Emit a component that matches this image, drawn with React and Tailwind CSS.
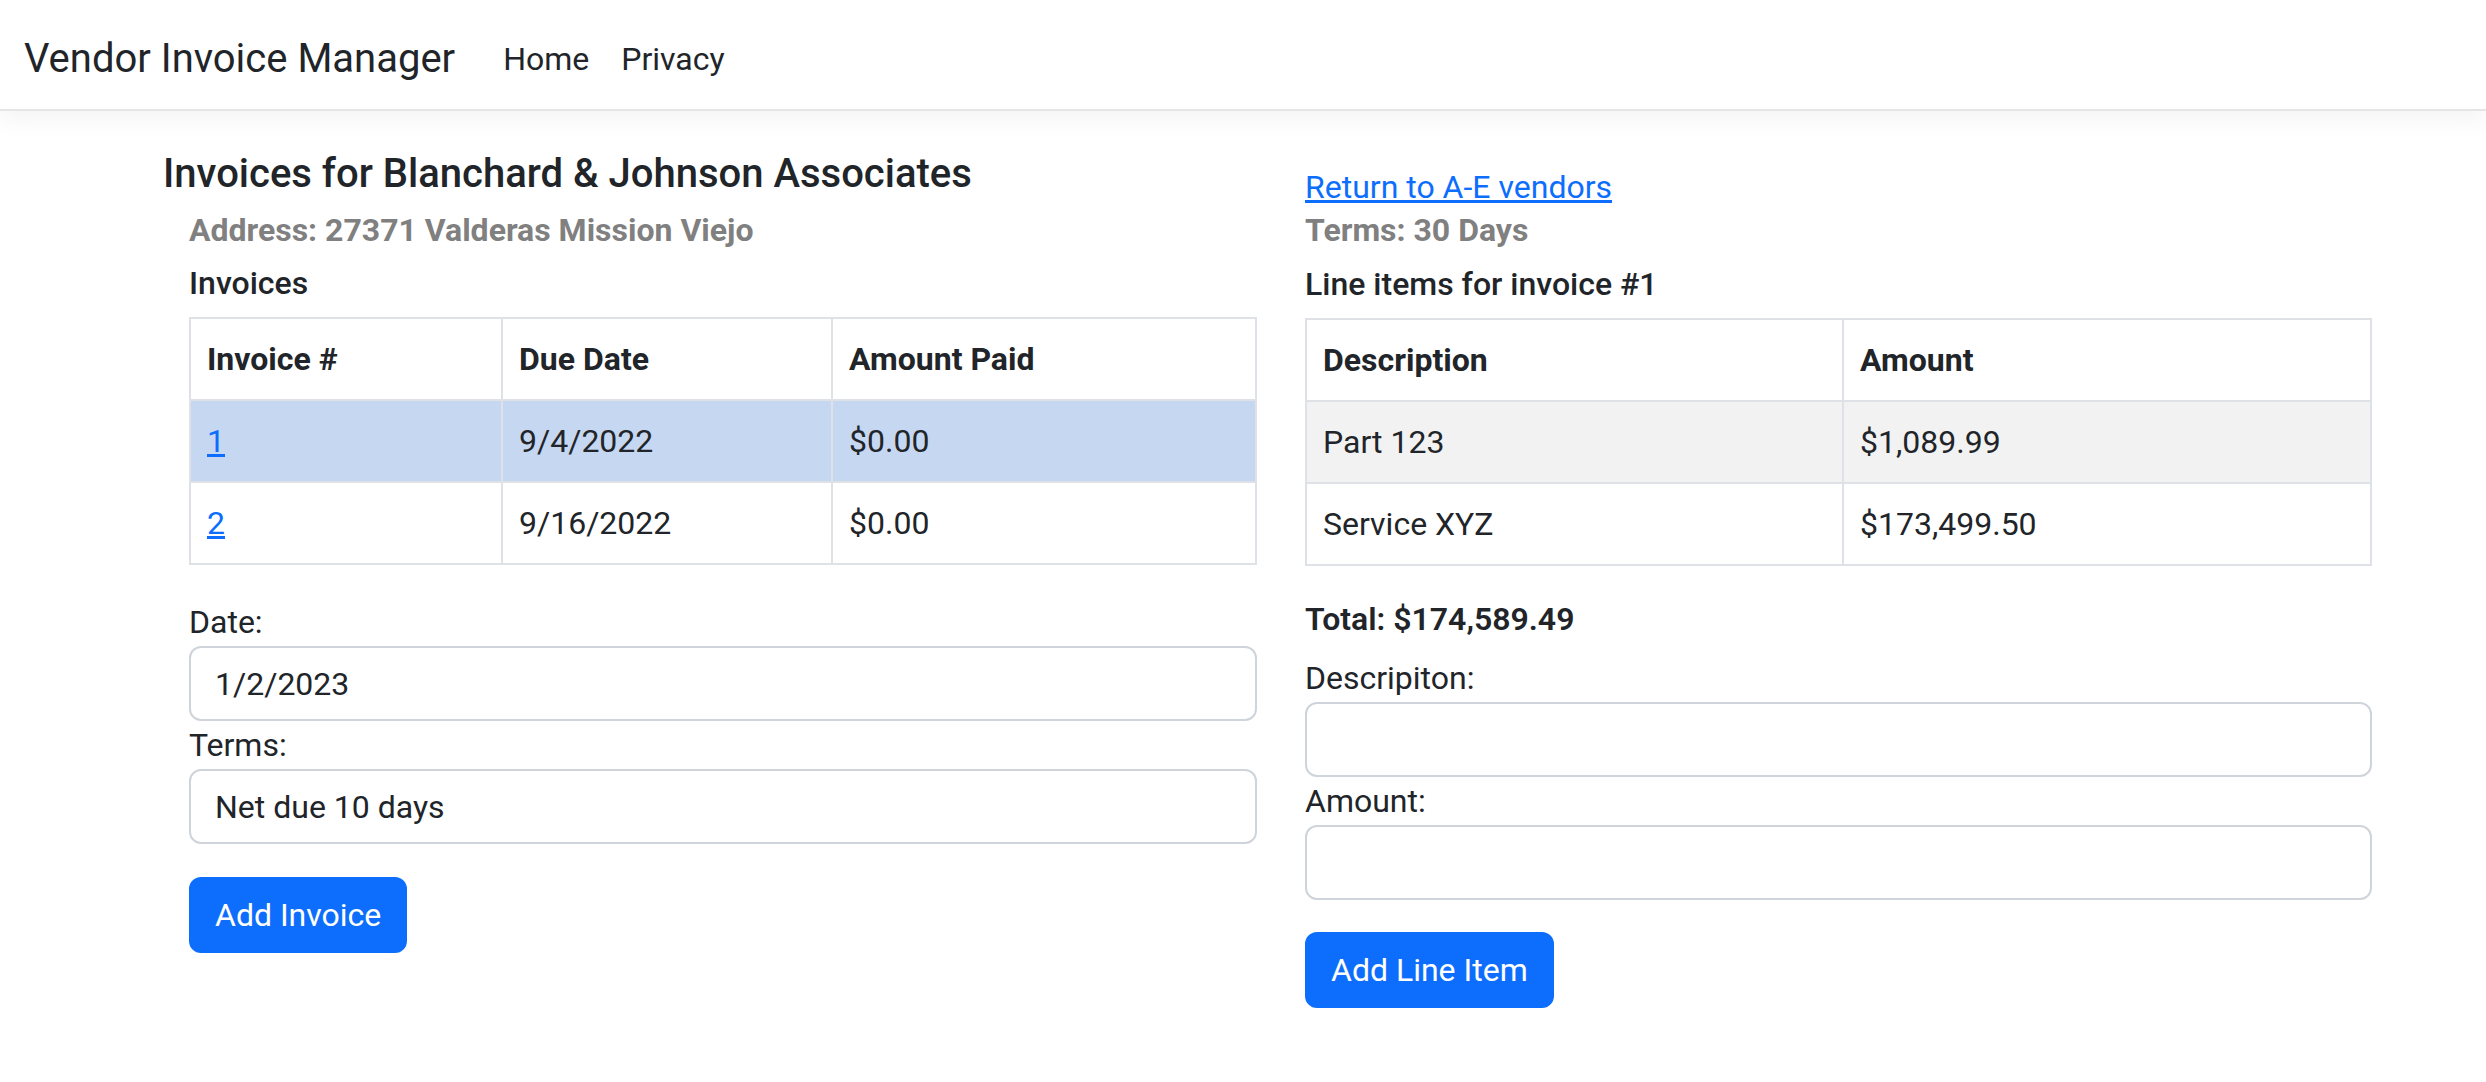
import React, { useState } from 'react';

const invoices = [
  { id: 1, due: '9/4/2022', paid: '$0.00' },
  { id: 2, due: '9/16/2022', paid: '$0.00' },
];

const lineItems = [
  { description: 'Part 123', amount: '$1,089.99' },
  { description: 'Service XYZ', amount: '$173,499.50' },
];

const App = () => {
  const [selected, setSelected] = useState(1);
  const [date, setDate] = useState('1/2/2023');
  const [terms, setTerms] = useState('Net due 10 days');
  const [description, setDescription] = useState('');
  const [amount, setAmount] = useState('');

  const cell = 'border-2 border-[#dee2e6] px-[16px] py-[16px] leading-[48px] text-left';
  const input =
    'block w-full h-[75px] border-2 border-[#ced4da] rounded-[12px] px-[24px] text-[32px] text-[#212529] bg-white outline-none';
  const button =
    'bg-[#0d6efd] text-white text-[32px] leading-[48px] px-[24px] py-[12px] rounded-[12px] border-2 border-[#0d6efd]';

  return (
    <div className="min-h-screen bg-white text-[#212529] font-['Roboto',sans-serif]">
      {/* Barra de navegação */}
      <nav className="h-[111px] flex items-center pt-[8px] px-[24px] border-b-2 border-[#e5e5e5] shadow-[0_8px_24px_rgba(0,0,0,0.05)]">
        <span className="text-[40px] leading-[60px] mr-[32px]">Vendor Invoice Manager</span>
        <a href="#" className="text-[32px] leading-[48px] px-[16px]">Home</a>
        <a href="#" className="text-[32px] leading-[48px] px-[16px]">Privacy</a>
      </nav>

      <main className="flex items-start pl-[163px] pt-[39px]">
        {/* Coluna das faturas */}
        <div className="w-[1094px]">
          <h5 className="text-[40px] leading-[48px] font-medium">
            Invoices for Blanchard &amp; Johnson Associates
          </h5>
          <div className="pl-[26px]">
            <div className="mt-[8px] text-[32px] leading-[48px] font-bold text-[#808080]">
              Address: 27371 Valderas Mission Viejo
            </div>
            <div className="mt-[5px] text-[32px] leading-[48px] font-medium">Invoices</div>

            <table className="mt-[10px] w-full border-collapse text-[32px] table-fixed">
              <thead>
                <tr>
                  <th className={`${cell} w-[312px] font-bold`}>Invoice #</th>
                  <th className={`${cell} w-[330px] font-bold`}>Due Date</th>
                  <th className={`${cell} font-bold`}>Amount Paid</th>
                </tr>
              </thead>
              <tbody>
                {invoices.map((inv) => (
                  <tr key={inv.id} className={inv.id === selected ? 'bg-[#c6d7f2]' : ''}>
                    <td className={cell}>
                      <a
                        href="#"
                        className="text-[#0d6efd] underline"
                        onClick={(e) => {
                          e.preventDefault();
                          setSelected(inv.id);
                        }}
                      >
                        {inv.id}
                      </a>
                    </td>
                    <td className={cell}>{inv.due}</td>
                    <td className={cell}>{inv.paid}</td>
                  </tr>
                ))}
              </tbody>
            </table>

            <label className="block mt-[33px] text-[32px] leading-[48px]">Date:</label>
            <input className={input} value={date} onChange={(e) => setDate(e.target.value)} />
            <label className="block text-[32px] leading-[48px]">Terms:</label>
            <input className={input} value={terms} onChange={(e) => setTerms(e.target.value)} />

            <button className={`${button} mt-[33px]`}>Add Invoice</button>
          </div>
        </div>

        {/* Coluna dos itens */}
        <div className="w-[1067px] ml-[48px] pt-[13px]">
          <a href="#" className="block text-[32px] leading-[48px] text-[#0d6efd] underline">
            Return to A-E vendors
          </a>
          <div className="-mt-[5px] text-[32px] leading-[48px] font-bold text-[#808080]">Terms: 30 Days</div>
          <div className="mt-[6px] text-[32px] leading-[48px] font-medium">Line items for invoice #{selected}</div>

          <table className="mt-[10px] w-full border-collapse text-[32px] table-fixed">
            <thead>
              <tr>
                <th className={`${cell} w-[537px] font-bold`}>Description</th>
                <th className={`${cell} font-bold`}>Amount</th>
              </tr>
            </thead>
            <tbody>
              {lineItems.map((item, i) => (
                <tr key={item.description} className={i % 2 === 0 ? 'bg-[#f2f2f2]' : ''}>
                  <td className={cell}>{item.description}</td>
                  <td className={cell}>{item.amount}</td>
                </tr>
              ))}
            </tbody>
          </table>

          <div className="mt-[29px] text-[32px] leading-[48px] font-semibold">Total: $174,589.49</div>

          <label className="block mt-[11px] text-[32px] leading-[48px]">Descripiton:</label>
          <input className={input} value={description} onChange={(e) => setDescription(e.target.value)} />
          <label className="block text-[32px] leading-[48px]">Amount:</label>
          <input className={input} value={amount} onChange={(e) => setAmount(e.target.value)} />

          <button className={`${button} mt-[32px]`}>Add Line Item</button>
        </div>
      </main>
    </div>
  );
};

export default App;
